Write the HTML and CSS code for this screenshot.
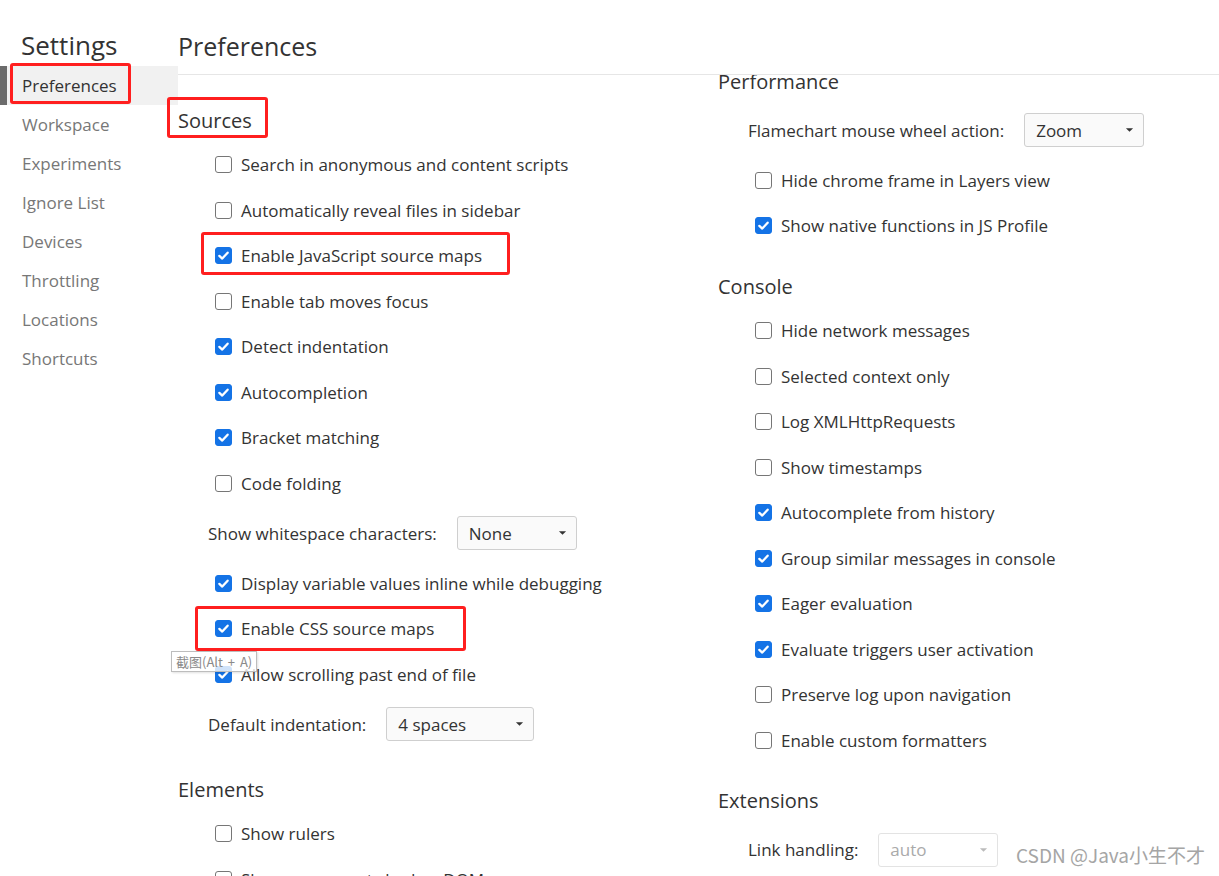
FILE: index.html
```html
<!DOCTYPE html>
<html lang="en">
<head>
<meta charset="utf-8">
<title>Settings - Preferences</title>
<link rel="stylesheet" href="styles.css">
</head>
<body>
<div class="app">
  <aside class="sidebar">
    <div class="sb-title">Settings</div>
    <nav class="sb-nav">
      <div class="sb-item active mark mark-nav">Preferences</div>
      <div class="sb-item">Workspace</div>
      <div class="sb-item">Experiments</div>
      <div class="sb-item">Ignore List</div>
      <div class="sb-item">Devices</div>
      <div class="sb-item">Throttling</div>
      <div class="sb-item">Locations</div>
      <div class="sb-item">Shortcuts</div>
    </nav>
  </aside>
  <main class="main">
    <header class="header"><h1 class="page-title">Preferences</h1></header>
    <div class="content">
      <section class="col col-left">
        <h2 class="sec-title mark mark-sources">Sources</h2>
        <div class="row"><span class="cb"></span><span class="lbl">Search in anonymous and content scripts</span></div>
        <div class="row"><span class="cb"></span><span class="lbl">Automatically reveal files in sidebar</span></div>
        <div class="row mark mark-js"><span class="cb on"><svg viewBox="0 0 17 17"><path d="M3.8 8.9 7.1 12 13.2 5.3"/></svg></span><span class="lbl">Enable JavaScript source maps</span></div>
        <div class="row"><span class="cb"></span><span class="lbl">Enable tab moves focus</span></div>
        <div class="row"><span class="cb on"><svg viewBox="0 0 17 17"><path d="M3.8 8.9 7.1 12 13.2 5.3"/></svg></span><span class="lbl">Detect indentation</span></div>
        <div class="row"><span class="cb on"><svg viewBox="0 0 17 17"><path d="M3.8 8.9 7.1 12 13.2 5.3"/></svg></span><span class="lbl">Autocompletion</span></div>
        <div class="row"><span class="cb on"><svg viewBox="0 0 17 17"><path d="M3.8 8.9 7.1 12 13.2 5.3"/></svg></span><span class="lbl">Bracket matching</span></div>
        <div class="row"><span class="cb"></span><span class="lbl">Code folding</span></div>
        <div class="sel-row">
          <span class="lbl">Show whitespace characters:</span>
          <div class="select w120"><span>None</span><svg viewBox="0 0 10 6"><path d="M1 1h8L5 5z"/></svg></div>
        </div>
        <div class="row"><span class="cb on"><svg viewBox="0 0 17 17"><path d="M3.8 8.9 7.1 12 13.2 5.3"/></svg></span><span class="lbl">Display variable values inline while debugging</span></div>
        <div class="row mark mark-css"><span class="cb on"><svg viewBox="0 0 17 17"><path d="M3.8 8.9 7.1 12 13.2 5.3"/></svg></span><span class="lbl">Enable CSS source maps</span></div>
        <div class="row"><span class="cb on"><svg viewBox="0 0 17 17"><path d="M3.8 8.9 7.1 12 13.2 5.3"/></svg></span><span class="lbl">Allow scrolling past end of file</span></div>
        <div class="sel-row">
          <span class="lbl">Default indentation:</span>
          <div class="select w148"><span>4 spaces</span><svg viewBox="0 0 10 6"><path d="M1 1h8L5 5z"/></svg></div>
        </div>
        <h2 class="sec-title">Elements</h2>
        <div class="row"><span class="cb"></span><span class="lbl">Show rulers</span></div>
        <div class="row"><span class="cb"></span><span class="lbl">Show user agent shadow DOM</span></div>
      </section>
      <section class="col col-right">
        <h2 class="sec-title">Performance</h2>
        <div class="sel-row">
          <span class="lbl">Flamechart mouse wheel action:</span>
          <div class="select w120"><span>Zoom</span><svg viewBox="0 0 10 6"><path d="M1 1h8L5 5z"/></svg></div>
        </div>
        <div class="row"><span class="cb"></span><span class="lbl">Hide chrome frame in Layers view</span></div>
        <div class="row"><span class="cb on"><svg viewBox="0 0 17 17"><path d="M3.8 8.9 7.1 12 13.2 5.3"/></svg></span><span class="lbl">Show native functions in JS Profile</span></div>
        <h2 class="sec-title">Console</h2>
        <div class="row"><span class="cb"></span><span class="lbl">Hide network messages</span></div>
        <div class="row"><span class="cb"></span><span class="lbl">Selected context only</span></div>
        <div class="row"><span class="cb"></span><span class="lbl">Log XMLHttpRequests</span></div>
        <div class="row"><span class="cb"></span><span class="lbl">Show timestamps</span></div>
        <div class="row"><span class="cb on"><svg viewBox="0 0 17 17"><path d="M3.8 8.9 7.1 12 13.2 5.3"/></svg></span><span class="lbl">Autocomplete from history</span></div>
        <div class="row"><span class="cb on"><svg viewBox="0 0 17 17"><path d="M3.8 8.9 7.1 12 13.2 5.3"/></svg></span><span class="lbl">Group similar messages in console</span></div>
        <div class="row"><span class="cb on"><svg viewBox="0 0 17 17"><path d="M3.8 8.9 7.1 12 13.2 5.3"/></svg></span><span class="lbl">Eager evaluation</span></div>
        <div class="row"><span class="cb on"><svg viewBox="0 0 17 17"><path d="M3.8 8.9 7.1 12 13.2 5.3"/></svg></span><span class="lbl">Evaluate triggers user activation</span></div>
        <div class="row"><span class="cb"></span><span class="lbl">Preserve log upon navigation</span></div>
        <div class="row"><span class="cb"></span><span class="lbl">Enable custom formatters</span></div>
        <h2 class="sec-title">Extensions</h2>
        <div class="sel-row">
          <span class="lbl">Link handling:</span>
          <div class="select w120 disabled"><span>auto</span><svg viewBox="0 0 10 6"><path d="M1 1h8L5 5z"/></svg></div>
        </div>
      </section>
    </div>
  </main>
</div>
<div class="tooltip">截图(Alt + A)</div>
<div class="watermark">CSDN @Java小生不才</div>
</body>
</html>
```

FILE: styles.css
```css
*, *::before, *::after { box-sizing: border-box; }

html, body {
  margin: 0;
  padding: 0;
  background: #fff;
}

body {
  font-family: "Open Sans", "Noto Sans CJK SC", sans-serif;
  font-size: 17px;
  color: #333;
  width: 1219px;
  height: 876px;
  overflow: hidden;
  position: relative;
}

.app {
  display: flex;
  height: 876px;
  overflow: hidden;
}

/* ---------- sidebar ---------- */
.sidebar {
  width: 178px;
  flex: none;
}

.sb-title {
  padding: 24px 0 0 21px;
  height: 66px;
  line-height: 42px;
  font-size: 26px;
  color: #333;
}

.sb-item {
  height: 39px;
  line-height: 39px;
  padding-left: 22px;
  color: #777;
}

.sb-item.active {
  background: #f1f1f1;
  color: #333;
  border-left: 7px solid #6b6b6b;
  padding-left: 15px;
}

/* ---------- main ---------- */
.main {
  flex: 1;
  display: flex;
  flex-direction: column;
  min-width: 0;
}

.header {
  height: 75px;
  border-bottom: 1px solid #e6e6e6;
  padding-top: 28px;
  flex: none;
}

.page-title {
  margin: 0;
  font-weight: 400;
  font-size: 25px;
  line-height: 36px;
  color: #333;
}

.content {
  flex: 1;
  display: grid;
  grid-template-columns: 540px 1fr;
  overflow-x: visible;
  overflow-y: clip;
  align-items: start;
}

.col-left { padding-top: 7.5px; }
.col-right { margin-top: -31.5px; }

.sec-title {
  margin: 0;
  height: 59.5px;
  padding-top: 26px;
  line-height: 23.5px;
  font-size: 20px;
  font-weight: 400;
  color: #333;
}

.row {
  height: 45.5px;
  display: flex;
  align-items: center;
  padding-left: 37px;
  white-space: nowrap;
}

.cb {
  width: 17px;
  height: 17px;
  border: 1px solid #767676;
  border-radius: 3px;
  background: #fff;
  flex: none;
  margin-right: 9px;
  display: flex;
}

.cb.on {
  background: #1473e6;
  border-color: #1473e6;
}

.cb svg {
  width: 100%;
  height: 100%;
  fill: none;
  stroke: #fff;
  stroke-width: 2.6;
  stroke-linecap: round;
  stroke-linejoin: round;
}

.sel-row {
  height: 54.5px;
  display: flex;
  align-items: center;
  padding-left: 30px;
  gap: 20px;
  white-space: nowrap;
}

.select {
  height: 34px;
  border: 1px solid #cfcfcf;
  border-radius: 3px;
  background: #fafafa;
  display: flex;
  align-items: center;
  justify-content: space-between;
  padding: 0 9px 0 11px;
  color: #333;
}

.select svg {
  width: 9px;
  height: 6px;
  fill: #333;
}

.select.w120 { width: 120px; }
.select.w148 { width: 148px; }

.select.disabled {
  border-color: #e3e3e3;
  background: #fff;
  color: #aaa;
}

.select.disabled svg { fill: #bbb; }

/* ---------- red annotation boxes ---------- */
.mark { position: relative; }

.mark::after {
  content: "";
  position: absolute;
  border: 3px solid #ff1f1f;
  border-radius: 3px;
  pointer-events: none;
}

.mark-nav::after { left: 3px; top: -3px; width: 121px; height: 41px; }
.mark-sources::after { left: -11px; top: 14px; width: 101px; height: 41px; }
.mark-js::after { left: 23px; top: -1px; width: 309px; height: 43px; }
.mark-css::after { left: 17px; top: 0; width: 271px; height: 45px; }

/* ---------- overlays ---------- */
.tooltip {
  position: absolute;
  left: 171px;
  top: 651px;
  width: 86px;
  height: 21px;
  padding: 0 4px;
  font-size: 13px;
  line-height: 19px;
  color: #8a8a8a;
  background: rgba(255, 255, 255, 0.8);
  border: 1px solid #bdbdbd;
  box-shadow: 1px 1px 2px rgba(0, 0, 0, 0.12);
  font-family: "Noto Sans CJK SC", sans-serif;
  word-spacing: 2px;
  white-space: nowrap;
}

.watermark {
  position: absolute;
  left: 1016px;
  top: 840px;
  font-family: "Noto Sans CJK SC", sans-serif;
  font-size: 19px;
  line-height: 30px;
  color: #a5a5a5;
  white-space: nowrap;
}
```
